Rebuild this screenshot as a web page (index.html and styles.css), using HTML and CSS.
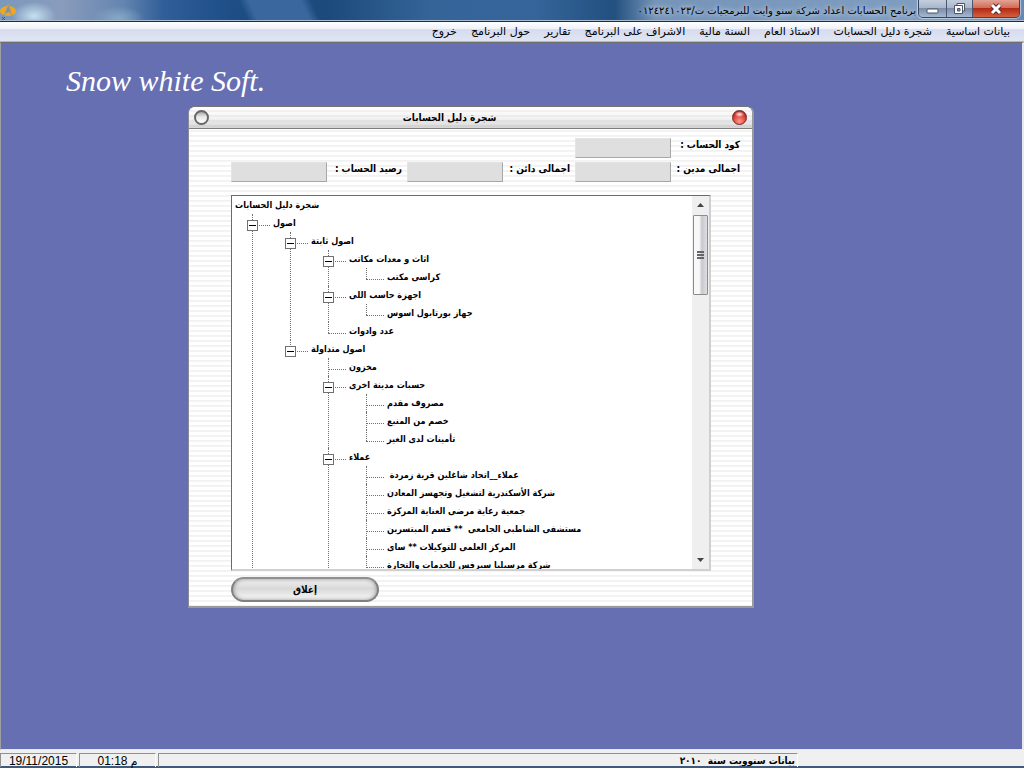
FILE: index.html
```html
<!DOCTYPE html>
<html lang="ar">
<head>
  <meta charset="UTF-8" />
  <meta name="viewport" content="width=device-width, initial-scale=1.0" />
  <title>برنامج الحسابات</title>
  <link rel="stylesheet" href="styles.css">
</head>
<body>
  <header class="titlebar">
    <svg class="app-icon" width="17" height="17" viewBox="0 0 17 17">
      <ellipse cx="8" cy="8" rx="8" ry="5" fill="#f0a818" />
      <path d="M8.500 1 L12 12 L8.500 9 L4 12 Z" fill="#8e8e8c" stroke="#a8a49c" stroke-width="1" />
      <path d="M2 14 L5 17 M5 14 L2 17" stroke="#556" stroke-width="1" />
    </svg>
    <h1 class="app-title" dir="rtl">برنامج الحسابات اعداد شركة سنو وايت للبرمجيات ت/٠١٢٤٢٤١٠٢٣</h1>
    <div class="window-buttons">
      <button class="win-btn" aria-label="Minimize">
        <svg width="13" height="12" viewBox="0 0 13 12"><rect x="1" y="6" width="11" height="4" rx="1" fill="#fff" stroke="#4a5468" /></svg>
      </button>
      <button class="win-btn restore" aria-label="Restore">
        <svg width="13" height="13" viewBox="0 0 13 13">
          <path d="M4 1.500h7.500v7.500h-2v2.500h-8v-8h2.500z" fill="#fff" stroke="#4a5468" />
          <path d="M4.500 6.500h2.500v2.500h-2.500z" fill="#8796ae" stroke="#4a5468" />
          <path d="M4 3.500h5.500v5.500" fill="none" stroke="#4a5468" />
        </svg>
      </button>
      <button class="win-btn close" aria-label="Close">
        <svg width="14" height="12" viewBox="0 0 14 12"><path d="M3 2l8 8M11 2l-8 8" stroke="#5a2a2a" stroke-width="5" /><path d="M3 2l8 8M11 2l-8 8" stroke="#fff" stroke-width="3" /></svg>
      </button>
    </div>
  </header>

  <nav class="menubar" dir="rtl">
    <button>بيانات اساسية</button>
    <button>شجرة دليل الحسابات</button>
    <button>الاستاذ العام</button>
    <button>السنة مالية</button>
    <button>الاشراف على البرنامج</button>
    <button>تقارير</button>
    <button>حول البرنامج</button>
    <button>خروج</button>
  </nav>

  <main class="workspace">
    <div class="brand">Snow white Soft.</div>

    <section class="dialog">
      <div class="dialog-title">
        <button class="orb" aria-label="Minimize"></button>
        <h2 dir="rtl">شجرة دليل الحسابات</h2>
        <button class="orb red" aria-label="Close"></button>
      </div>
      <div class="dialog-body">
        <form class="fields" dir="rtl">
          <label for="code">كود الحساب :</label>
          <input type="text" id="code" readonly />
          <label for="debit" class="first">اجمالى مدين :</label>
          <input type="text" id="debit" readonly />
          <label for="credit">اجمالى دائن :</label>
          <input type="text" id="credit" readonly />
          <label for="balance">رصيد الحساب :</label>
          <input type="text" id="balance" readonly />
        </form>

        <div class="tree-box">
          <div class="tree">
            <span class="node" dir="rtl">شجرة دليل الحسابات</span>
            <ul>
              <li class="more"><button class="toggle" aria-label="Collapse"></button><span class="node" dir="rtl">اصول</span>
                <ul>
                  <li><button class="toggle" aria-label="Collapse"></button><span class="node" dir="rtl">اصول ثابتة</span>
                    <ul>
                      <li><button class="toggle" aria-label="Collapse"></button><span class="node" dir="rtl">اثاث و معدات مكاتب</span>
                        <ul>
                          <li><span class="node" dir="rtl">كراسى مكتب</span></li>
                        </ul>
                      </li>
                      <li><button class="toggle" aria-label="Collapse"></button><span class="node" dir="rtl">اجهزة حاسب اللى</span>
                        <ul>
                          <li><span class="node" dir="rtl">جهاز بورتابول اسوس</span></li>
                        </ul>
                      </li>
                      <li><span class="node" dir="rtl">عدد وادوات</span></li>
                    </ul>
                  </li>
                  <li><button class="toggle" aria-label="Collapse"></button><span class="node" dir="rtl">اصول متداولة</span>
                    <ul>
                      <li><span class="node" dir="rtl">مخزون</span></li>
                      <li><button class="toggle" aria-label="Collapse"></button><span class="node" dir="rtl">حسبات مدينة اخرى</span>
                        <ul>
                          <li><span class="node" dir="rtl">مصروف مقدم</span></li>
                          <li><span class="node" dir="rtl">خصم من المنبع</span></li>
                          <li><span class="node" dir="rtl">تأمينات لدى الغير</span></li>
                        </ul>
                      </li>
                      <li class="more"><button class="toggle" aria-label="Collapse"></button><span class="node" dir="rtl">عملاء</span>
                        <ul>
                          <li><span class="node" dir="rtl">عملاء__اتحاد شاغلين قرية زمردة </span></li>
                          <li><span class="node" dir="rtl">شركة الأسكندرية لتشغيل وتجهسز المعادن</span></li>
                          <li><span class="node" dir="rtl">جمعية رعاية مرضى العناية المركزة</span></li>
                          <li><span class="node" dir="rtl">مستشفى الشاطبى الجامعى  ** قسم المبتسرين</span></li>
                          <li><span class="node" dir="rtl">المركز العلمى للتوكيلات ** ساى</span></li>
                          <li class="more"><span class="node" dir="rtl">شركة مرسيليا سيرفس للخدمات والتجارة</span></li>
                        </ul>
                      </li>
                    </ul>
                  </li>
                </ul>
              </li>
            </ul>
          </div>
          <div class="scrollbar">
            <svg width="7" height="4" viewBox="0 0 7 4"><path d="M0 4L3.500 0L7 4z" fill="#444" /></svg>
            <div class="thumb"><i></i><i></i><i></i></div>
            <svg width="7" height="4" viewBox="0 0 7 4"><path d="M0 0L3.500 4L7 0z" fill="#444" /></svg>
          </div>
        </div>

        <button class="close-btn">إغلاق</button>
      </div>
    </section>
  </main>

  <footer class="statusbar">
    <div class="panel date">19/11/2015</div>
    <div class="panel time">01:18 م</div>
    <div class="panel info" dir="rtl">بيانات سنوويت سنة  ٢٠١٠</div>
  </footer>
</body>
</html>
```
FILE: styles.css
```css
* {
  box-sizing: border-box;
}

body {
  margin: 0;
  height: 100vh;
  display: flex;
  flex-direction: column;
  overflow: hidden;
  font-family: "DejaVu Sans Condensed", "DejaVu Sans", sans-serif;
  font-size: 10px;
  font-weight: bold;
  color: #000;
  background: #f0f0f0;
}

button {
  font: inherit;
  color: inherit;
  border: none;
  padding: 0;
  background: none;
}

h1, h2 {
  margin: 0;
  font-size: 10px;
}

ul {
  list-style: none;
  margin: 0;
  padding: 0;
}

/* title bar */
.titlebar {
  display: flex;
  align-items: flex-start;
  height: 22px;
  padding-right: 4px;
  border-bottom: 1px solid #1c2c48;
  box-shadow: inset 0 -1px #a9bcd4;
  background:
    radial-gradient(ellipse 22px 14px at 34px 16px, #c5e0f0, rgba(197, 224, 240, 0)),
    radial-gradient(ellipse 26px 12px at 118px 18px, #87a8c4, rgba(135, 168, 196, 0)),
    linear-gradient(65deg, rgba(255, 255, 255, 0) 24%, #3a689e 25%, #3a689e 30%, rgba(255, 255, 255, 0) 31%),
    linear-gradient(90deg, #7b98bd 0, #8a9cbc 6%, #6485b0 12%, #2f5e98 16%, #1d4d85 23%, #1d4a7c 32%, #346498 42%, #36659b 52%, #22507f 60%, #7594b8 64%, #7f9dc0 90%, #6688b3 100%);
}

.app-icon {
  margin-top: 3px;
}

.app-title {
  flex: 1;
  font-family: "DejaVu Sans", sans-serif;
  font-weight: normal;
  line-height: 22px;
  white-space: nowrap;
  text-align: right;
  padding-right: 2px;
  text-shadow: 0 0 6px #c6d6ea, 0 0 4px #c6d6ea;
}

.window-buttons {
  display: flex;
  height: 18px;
  border: 1px solid #39455c;
  border-top: none;
  border-radius: 0 0 5px 5px;
  overflow: hidden;
  box-shadow: 0 0 1px 1px rgba(255, 255, 255, 0.5);
}

.win-btn {
  display: flex;
  align-items: center;
  justify-content: center;
  width: 28px;
  background: linear-gradient(#c3cedd, #a8b6ca 48%, #7b8da9 50%, #a6b9d2);
  border-right: 1px solid #4b5870;
}

.win-btn.restore {
  width: 26px;
}

.win-btn.close {
  width: 46px;
  border-right: none;
  background: linear-gradient(#e2a394, #cf6a55 48%, #b42a15 50%, #d5603e);
}

/* menu */
.menubar {
  display: flex;
  gap: 14px;
  height: 20px;
  padding: 0 14px;
  font-family: "DejaVu Sans", sans-serif;
  font-size: 11px;
  font-weight: normal;
  background: linear-gradient(#fff, #eef1f9 36%, #d6dcee 40%, #dfe4f3 92%);
  border-bottom: 1px solid #b4b8c4;
}

.menubar button {
  white-space: nowrap;
  line-height: 18px;
}

/* workspace */
.workspace {
  position: relative;
  flex: 1;
  background: #666fb2;
  border-top: 1px solid #6e6e6e;
  border-left: 1px solid #a0a0a0;
  border-right: 2px solid #e8e8ee;
  border-bottom: 1px solid #e8e8ee;
}

.brand {
  padding: 20px 65px;
  font: italic 30px/36px "Liberation Serif", serif;
  color: #fff;
}

.dialog {
  position: absolute;
  left: 187px;
  top: 63px;
  width: 566px;
  border: 1px solid #8b8b93;
  border-top-color: #777;
  border-right: 2px solid #9a9a9a;
  border-bottom: 2px solid #9a9a9a;
  border-radius: 7px 7px 0 0;
  background: repeating-linear-gradient(#fff 0, #fff 3px, #f1f1f1 3px, #f5f5f5 5px);
}

.dialog-title {
  display: flex;
  align-items: center;
  height: 22px;
  padding: 0 5px;
  border-bottom: 1px solid #7d7d7d;
  border-radius: 6px 6px 0 0;
  background:
    repeating-linear-gradient(rgba(0, 0, 0, 0) 0, rgba(0, 0, 0, 0) 3px, rgba(0, 0, 0, 0.04) 3px, rgba(0, 0, 0, 0.04) 5px),
    linear-gradient(#fff, #f4f4f4 50%, #d6d6d6);
}

/* the caption is centred on the part left of the scroll bar */
.dialog-title h2 {
  flex: 1;
  padding-right: 42px;
  text-align: center;
}

.orb {
  width: 15px;
  height: 15px;
  border: 2px solid #666;
  border-radius: 50%;
  background: linear-gradient(#aaa, #e8e8e8 45%, #fff);
}

.orb.red {
  border: 1px solid #6c2525;
  background: radial-gradient(ellipse 5px 3px at 50% 25%, #fff0ee, rgba(255, 255, 255, 0)), radial-gradient(circle at 50% 80%, #ff9a8c, #d6352b 60%, #8a1c18);
}

.dialog-body {
  display: flex;
  flex-direction: column;
  align-items: flex-start;
  padding: 9px 5px 4px 42px;
}

.fields {
  display: grid;
  grid-template-columns: 74px 96px 72px 96px 80px 96px;
  row-gap: 4px;
}

.fields label {
  padding-right: 5px;
  line-height: 14px;
  white-space: nowrap;
}

.fields .first {
  grid-column: 1;
}

.fields input {
  width: 96px;
  height: 20px;
  border: 1px solid #e4e4e4;
  border-right-color: #a8a8a8;
  border-bottom-color: #a8a8a8;
  background: #e0dfe0;
}

/* accounts tree */
.tree-box {
  display: flex;
  width: 480px;
  height: 376px;
  margin-top: 13px;
  border: 2px solid #d0d0d0;
  border-top: 1px solid #6a6a6a;
  border-left: 1px solid #6a6a6a;
  background: #fff;
}

.tree {
  flex: 1;
  overflow: hidden;
  padding-left: 3px;
  font-size: 9px;
}

.tree ul {
  margin-left: 17px;
}

.tree li {
  position: relative;
  padding-left: 21px;
}

.node {
  display: table;
  line-height: 18px;
  height: 18px;
  white-space: pre;
}

.tree li::before {
  content: "";
  position: absolute;
  left: 0;
  top: 0;
  bottom: 0;
  border-left: 1px dotted #707070;
}

.tree li:last-child:not(.more)::before {
  bottom: auto;
  height: 11px;
}

.tree li::after {
  content: "";
  position: absolute;
  left: 0;
  top: 11px;
  width: 18px;
  border-top: 1px dotted #707070;
}

.toggle {
  position: absolute;
  z-index: 1;
  left: -5px;
  top: 6px;
  width: 11px;
  height: 11px;
  border: 1px solid #707070;
  background: linear-gradient(#000, #000) center / 7px 1px no-repeat #fff;
}

.scrollbar {
  display: flex;
  flex-direction: column;
  align-items: center;
  width: 17px;
  padding: 7px 0;
  background: #efefef;
}

.thumb {
  display: flex;
  flex-direction: column;
  align-items: center;
  justify-content: center;
  gap: 1px;
  width: 15px;
  height: 80px;
  margin: 8px 0 auto;
  border: 1px solid #8c8c8c;
  border-radius: 1px;
  background: linear-gradient(90deg, #f8f8f8 40%, #c8c8ce 60%, #dedee4);
}

.thumb i {
  width: 7px;
  height: 2px;
  background: #666;
}

.close-btn {
  width: 148px;
  height: 25px;
  margin-top: 6px;
  border: 2px solid #808080;
  border-top-color: #909090;
  border-radius: 13px;
  background: linear-gradient(#f4f4f4, #d8d8d8 45%, #e6e6e6 70%, #fff);
  box-shadow: inset 0 0 4px #888;
}

/* status bar */
.statusbar {
  display: flex;
  gap: 2px;
  padding-top: 3px;
  height: 18px;
  border-bottom: 2px solid #3d5a7c;
  background: #f0f0f0;
}

.panel {
  height: 14px;
  line-height: 14px;
  border-top: 1px solid #909090;
  border-left: 1px solid #909090;
  border-right: 1px solid #fff;
  white-space: pre;
  text-align: center;
}

.date,
.time {
  width: 77px;
  font-family: "Liberation Sans", "DejaVu Sans Condensed", sans-serif;
  font-size: 12px;
  font-weight: normal;
}

.info {
  width: 640px;
  padding-right: 2px;
  text-align: right;
}
```
